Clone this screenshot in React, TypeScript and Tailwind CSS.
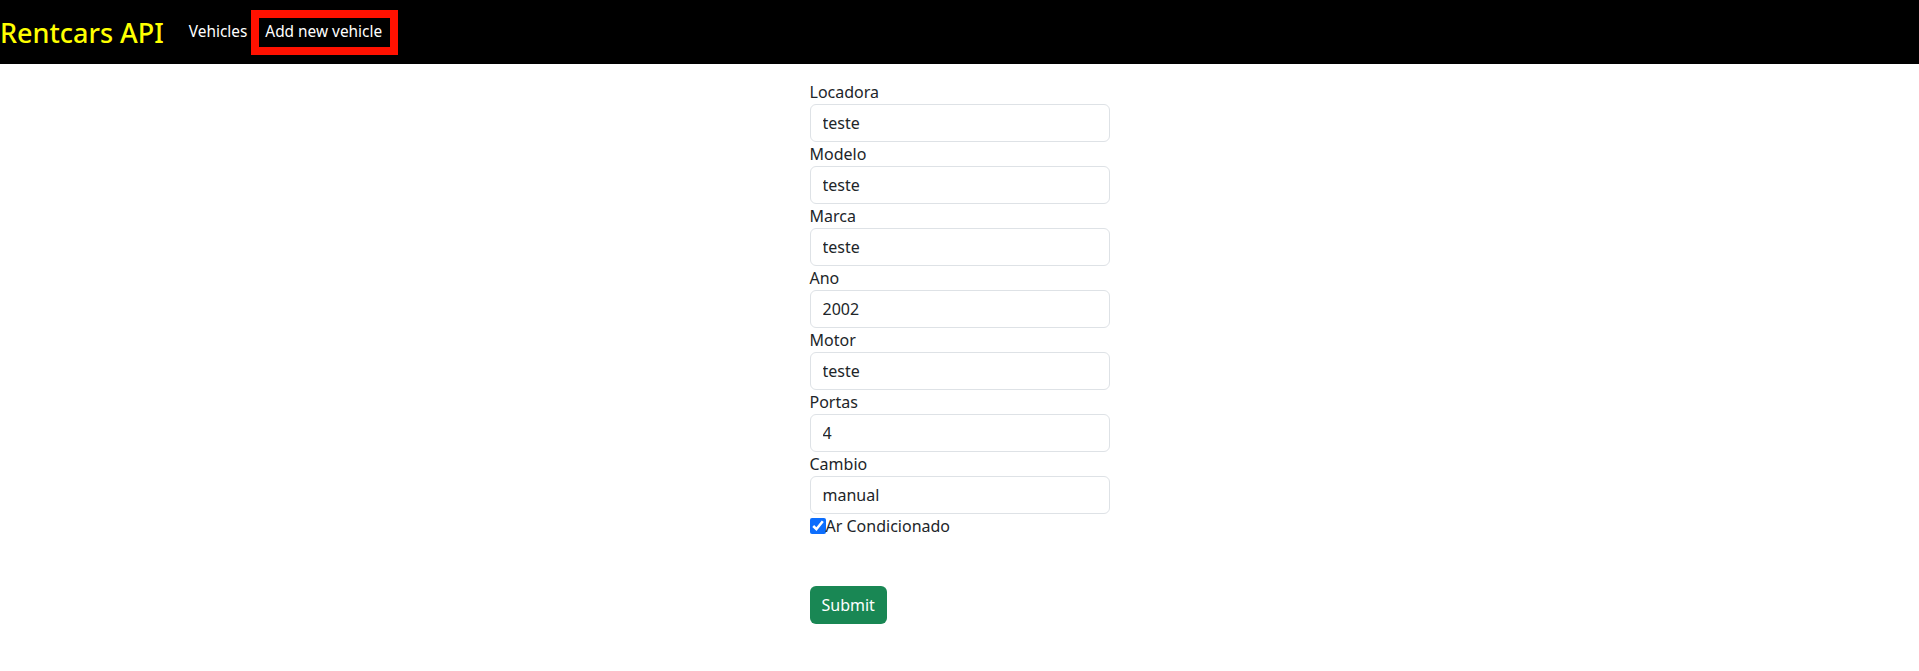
import { useState } from 'react'

const FIELDS: { label: string; value: string }[] = [
  { label: 'Locadora', value: 'teste' },
  { label: 'Modelo', value: 'teste' },
  { label: 'Marca', value: 'teste' },
  { label: 'Ano', value: '2002' },
  { label: 'Motor', value: 'teste' },
  { label: 'Portas', value: '4' },
  { label: 'Cambio', value: 'manual' },
]

export default function App() {
  const [values, setValues] = useState(FIELDS.map((f) => f.value))
  const [ar, setAr] = useState(true)

  return (
    <div className="min-h-screen bg-white text-[#212529] font-['Noto_Sans',sans-serif]">
      <nav className="h-16 bg-black flex items-center">
        <span className="text-[27px] font-medium leading-none text-[#ffff00] pr-[25px]">Rentcars API</span>
        <a className="text-[15.4px] text-white">Vehicles</a>
        <a className="ml-1 border-[8px] border-[#ff1100] pl-[6px] pr-[8px] h-[45px] flex items-center text-[15.4px] text-white">
          Add new vehicle
        </a>
      </nav>

      <form className="w-[300px] mx-auto mt-4" onSubmit={(e) => e.preventDefault()}>
        {FIELDS.map((f, i) => (
          <div key={f.label}>
            <label className="block text-base leading-6">{f.label}</label>
            <input
              className="block w-full h-[38px] px-3 border border-[#dee2e6] rounded-md text-base text-[#212529] outline-none"
              value={values[i]}
              onChange={(e) => setValues(values.map((v, j) => (j === i ? e.target.value : v)))}
            />
          </div>
        ))}
        <label className="flex items-center h-6 text-base">
          <input
            type="checkbox"
            checked={ar}
            onChange={(e) => setAr(e.target.checked)}
            className="w-4 h-4 m-0 accent-[#0d6efd]"
          />
          Ar Condicionado
        </label>
        <div className="h-12" />
        <button
          type="submit"
          className="h-[38px] px-3 rounded-md bg-[#198754] text-white text-base"
        >
          Submit
        </button>
      </form>
    </div>
  )
}
